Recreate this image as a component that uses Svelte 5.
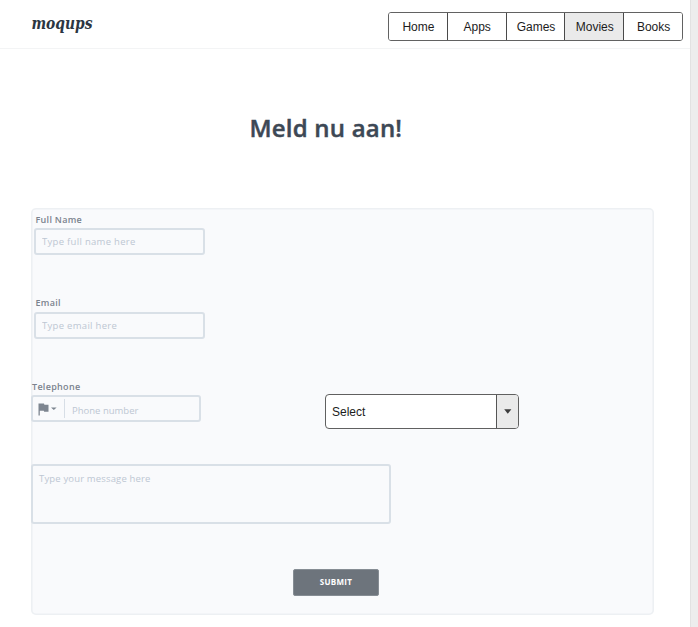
<script>
  const tabs = ['Home', 'Apps', 'Games', 'Movies', 'Books'];
  let active = $state('Movies');
</script>

<div class="page">
  <main>
    <header>
      <svg class="logo" width="66" height="30" viewBox="0 0 66 30" role="img" aria-label="moqups">
        <text x="0.5" y="16.5" textLength="61" lengthAdjust="spacingAndGlyphs">moqups</text>
      </svg>
      <nav>
        {#each tabs as tab}
          <button class:active={active === tab} onclick={() => (active = tab)}>{tab}</button>
        {/each}
      </nav>
    </header>

    <h1>Meld nu aan!</h1>

    <form onsubmit={(e) => e.preventDefault()}>
      <div class="field inset">
        <label for="name">Full Name</label>
        <input id="name" class="box" placeholder="Type full name here" />
      </div>
      <div class="field inset email">
        <label for="email">Email</label>
        <input id="email" class="box" placeholder="Type email here" />
      </div>
      <div class="row">
        <div class="field">
          <label class="flush" for="phone">Telephone</label>
          <div class="box phone">
            <svg width="20" height="14" viewBox="0 0 20 14">
              <path d="M0.5 0.5H6L6.4 1.7H10.5V8.8H6.2L5.8 7.7H1.8V12.5H0.5Z" fill="#7d8590" />
              <path d="M13 4.4H18.6L15.8 7Z" fill="#7d8590" />
            </svg>
            <input id="phone" placeholder="Phone number" />
          </div>
        </div>
        <div class="select">
          <span>Select</span>
          <i><svg width="8" height="5" viewBox="0 0 8 5"><path d="M0.2 0.3H7.4L3.8 4.7Z" fill="#3c3c3c" /></svg></i>
        </div>
      </div>
      <textarea class="box" placeholder="Type your message here"></textarea>
      <button class="submit">SUBMIT</button>
    </form>
  </main>
  <aside></aside>
</div>

<style>
  :global(body) { margin: 0; background: #fff; overflow: hidden; }
  * { box-sizing: border-box; }
  .page { display: flex; width: 698px; height: 627px; font-family: "Open Sans", sans-serif; }
  main { width: 690px; }
  aside { width: 8px; background: #ededed; border-left: 1px solid #e2e2e2; }
  header { display: flex; justify-content: space-between; align-items: flex-start; height: 49px; padding: 12px 7px 0 31px; border-bottom: 1px solid #f3f4f5; }
  .logo { overflow: visible; }
  .logo text { font: italic 700 17px "DejaVu Serif", serif; fill: #2b3642; }
  nav { display: flex; width: 295px; height: 29px; border: 1px solid #626262; border-radius: 3px; overflow: hidden; }
  nav button { flex: 1 1 0; padding: 1px 0 0 1px; border: 0; border-left: 1px solid #4a4a4a; background: #fff; color: #1c1c1c; font: 12px/26px "Liberation Sans", Arial, sans-serif; }
  nav button:first-child { border-left: 0; }
  nav button.active { background: #eaeaea; }
  h1 { margin: 62px 0 0 249.5px; height: 97px; font-size: 24px; line-height: 34px; font-weight: 600; letter-spacing: 0.2px; -webkit-text-stroke: 0.45px #3d4855; color: #3d4855; white-space: nowrap; }
  form { width: 623px; height: 407px; margin-left: 31px; padding-top: 5px; border-radius: 5px; background: #f9fafc; box-shadow: inset 0 0 0 1.6px #edf0f3; }
  .field { display: flex; flex-direction: column; }
  .inset { padding-left: 3px; }
  label { height: 15px; padding: 1px 0 0 1.5px; font-size: 9px; line-height: 12px; font-weight: 600; letter-spacing: 0.3px; color: #7b838e; }
  label.flush { padding-left: 1px; }
  .box { width: 171px; height: 27px; border: 2px solid #d9e0e7; border-radius: 3px; background: transparent; }
  input, textarea { display: block; margin: 0; padding: 0 6px; outline: 0; font: 9.5px "Open Sans", sans-serif; letter-spacing: 0.3px; color: #68727e; }
  ::placeholder { color: #bdc7d3; opacity: 1; }
  .email { margin-top: 41px; }
  .email .box { margin-top: 0.5px; }
  .row { display: flex; align-items: flex-start; margin-top: 41.5px; }
  .phone { display: flex; width: 170px; }
  .phone svg { margin: 6px 6px 0 5px; flex: none; }
  .phone input { width: 125px; height: 19px; margin-top: 2px; padding: 3px 0 0 7px; border: 0; border-left: 1px solid #d7dee6; background: transparent; letter-spacing: 0; }
  .select { display: flex; width: 194px; height: 35px; margin: 13.5px 0 0 124px; border: 1px solid #606060; border-radius: 4px; overflow: hidden; background: #fff; font: 12px/34px "Liberation Sans", Arial, sans-serif; color: #1c1c1c; }
  .select span { flex: 1; padding-left: 6px; }
  .select i { display: flex; align-items: center; justify-content: center; width: 22px; border-left: 1px solid #555; background: #eaeaea; }
  textarea.box { width: 360px; height: 60px; margin-top: 35px; padding-top: 6px; resize: none; letter-spacing: 0.16px; }
  .submit { display: block; width: 86px; height: 27px; margin: 45.5px 0 0 262px; padding: 0 0 2px; border: 1px solid #868d94; border-radius: 2px; background: #6d747c; color: #fff; font: 700 8px "Open Sans", sans-serif; letter-spacing: 0.3px; }
</style>
